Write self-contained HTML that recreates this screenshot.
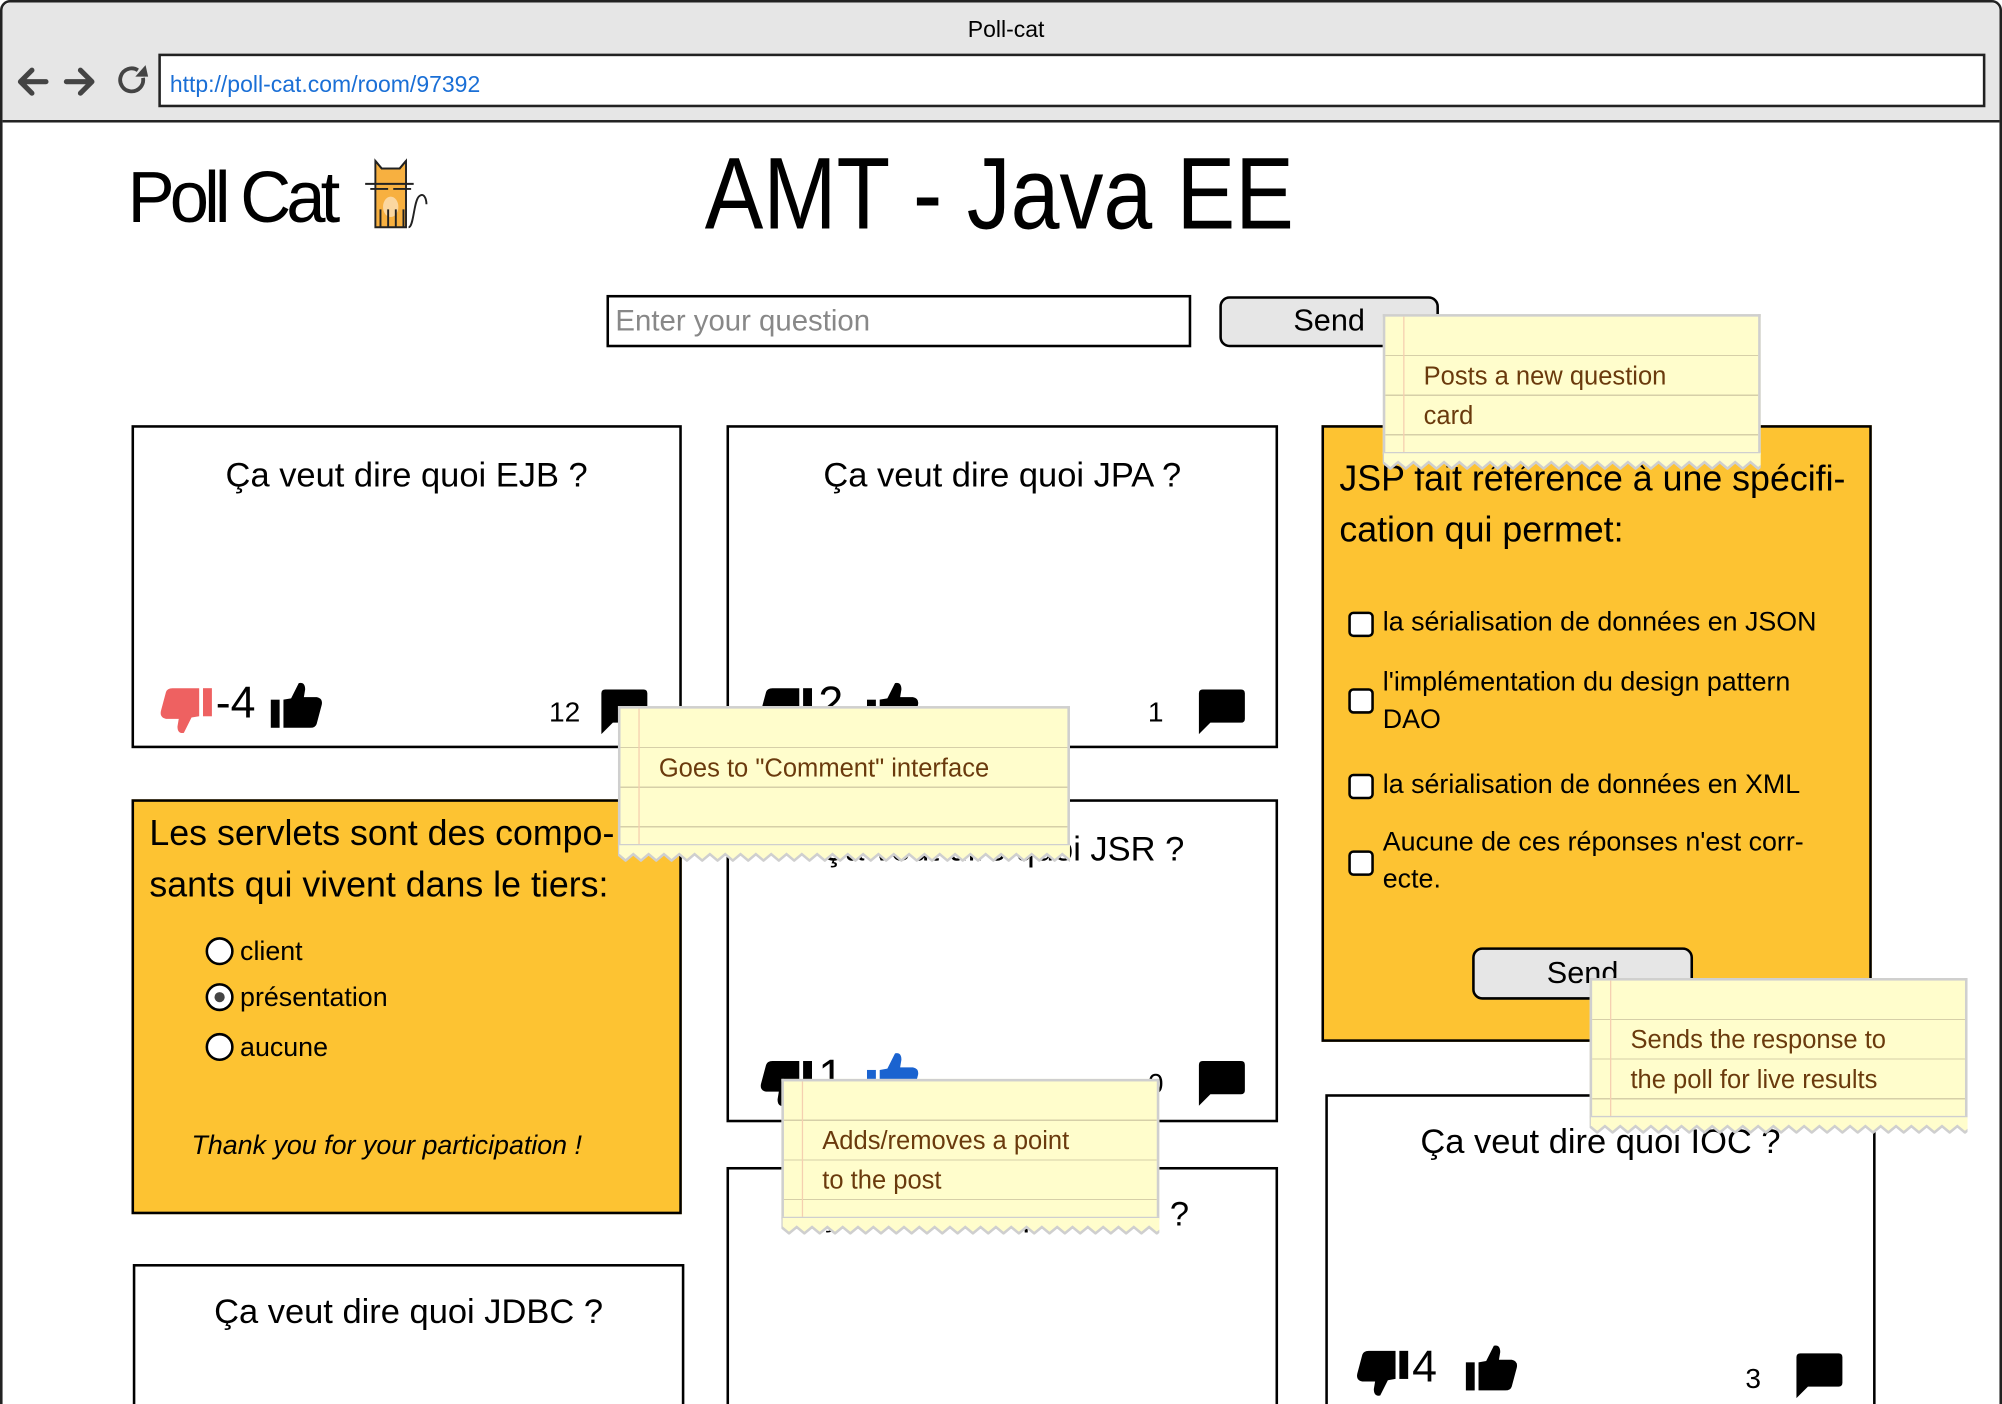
<!DOCTYPE html>
<html><head><meta charset="utf-8">
<style>
html,body{margin:0;padding:0;width:2002px;height:1404px;overflow:hidden;background:#fff}
#w{position:absolute;left:0;top:0;width:1568px;height:1100px;overflow:hidden;transform:scale(1.27679);transform-origin:0 0;font-family:"Liberation Sans",sans-serif;color:#000}
.a{position:absolute}
.card{position:absolute;border:2px solid #000;background:#fff;box-sizing:border-box;overflow:hidden}
.org{background:#FDC332}
.q{position:absolute;left:0;right:0;text-align:center;font-size:27px;white-space:nowrap}
.note{position:absolute;background:#FFFDCC;border:2px solid #cfcfcf;border-bottom:none;box-sizing:border-box;
 background-image:repeating-linear-gradient(to bottom,transparent 0,transparent 30px,#d6cfa8 30px,#d6cfa8 31px);background-position:0 0;color:#6a3a0d;font-size:20px;overflow:visible}
.note .pl{position:absolute;left:14px;top:0;bottom:0;width:1px;background:#f5cfb0}
.note .t{position:absolute;left:30px;line-height:31px}
.note svg{position:absolute;left:-2px;bottom:-12px}
.cb{position:absolute;width:20px;height:20px;border:2px solid #000;border-radius:4px;background:#fff;box-sizing:border-box}
.rd{position:absolute;width:22px;height:22px;border:2px solid #000;border-radius:50%;background:#fff;box-sizing:border-box}
.opt{position:absolute;font-size:21px;line-height:29px}
.btn{position:absolute;border:2px solid #000;border-radius:8px;background:#e6e6e6;box-sizing:border-box;text-align:center;font-size:24px}
</style></head><body><div id="w">
<div class="a" style="left:0;top:0;width:1568px;height:1110px;border:2px solid #222;border-radius:8px 8px 0 0;box-sizing:border-box"></div>
<div class="a" style="left:2px;top:2px;width:1564px;height:92px;background:#e6e6e6;border-radius:7px 7px 0 0;border-bottom:2px solid #222"></div>
<div class="a" style="left:0;width:1576px;top:13px;text-align:center;font-size:18px">Poll-cat</div>
<svg class="a" style="left:12px;top:50px" width="105" height="28" viewBox="0 0 105 28">
<path d="M24 14H5M13 5L4 14l9 9" stroke="#444" stroke-width="4" fill="none" stroke-linecap="round" stroke-linejoin="round"/>
<path d="M40 14h19M51 5l9 9-9 9" stroke="#444" stroke-width="4" fill="none" stroke-linecap="round" stroke-linejoin="round"/>
<path d="M96 5a9 9 0 1 0 4 6" stroke="#444" stroke-width="3" fill="none"/><path d="M94 10h10l-2-9z" fill="#444"/>
</svg>
<div class="a" style="left:124px;top:42px;width:1431px;height:42px;border:2px solid #222;background:#fff;box-sizing:border-box"></div>
<div class="a" style="left:133px;top:56px;font-size:18px;color:#1a6fd6">http://poll-cat.com/room/97392</div>

<div class="a" style="left:100px;top:120px;font-size:57px;letter-spacing:-4px;line-height:70px;transform:scaleX(0.97);transform-origin:0 0">Poll Cat</div>
<svg class="a" style="left:284px;top:116px" width="54" height="68" viewBox="0 0 54 68">
<path d="M10 62V10l5 6h14l5-6v52z" fill="#F7B040" stroke="#222" stroke-width="1.5"/>
<path d="M10 10l5 6h14l5-6" fill="none" stroke="#222" stroke-width="1.5"/>
<path d="M2 28h22M20 28h20M6 32h14M24 32h14" stroke="#222" stroke-width="1.5"/>
<ellipse cx="22" cy="46" rx="6" ry="8" fill="#fbd7a0"/>
<path d="M14 48v14M20 48v14M26 48v14M32 48v14" stroke="#222" stroke-width="1.5"/>
<path d="M36 62c4 0 4-20 8-24s6 2 6 6" fill="none" stroke="#222" stroke-width="1.5"/>
</svg>
<div class="a" style="left:552px;top:104px;font-size:80px;line-height:96px;white-space:nowrap;transform:scaleX(0.86);transform-origin:0 0">AMT - Java EE</div>

<div class="a" style="left:475px;top:231px;width:458px;height:41px;border:2px solid #000;box-sizing:border-box"></div>
<div class="a" style="left:482px;top:238px;font-size:23px;color:#888">Enter your question</div>
<div class="btn" style="left:955px;top:232px;width:172px;height:40px;line-height:36px">Send</div>

<svg width="0" height="0" style="position:absolute">
<defs>
<g id="up"><rect x="0" y="14" width="7" height="22"/><path d="M10 14L16 13L22 1Q27 0 27 6L26 12L36 12Q41 13 40 18L36 33Q35 36 31 36L10 36Z"/></g>
<g id="dn"><g transform="rotate(180 20.5 18.5)"><use href="#up"/></g></g>
<g id="cm"><path d="M3 2H35Q38 2 38 5V25Q38 28 35 28H11L2 37V5Q2 2 5 2Z"/></g>
</defs></svg>

<div class="card" style="left:103px;top:333px;width:431px;height:253px">
<div class="q" style="top:22px">Ça veut dire quoi EJB ?</div>
<svg class="a" style="left:20px;top:203px" width="41" height="37" viewBox="0 0 41 37"><g fill="#EE6161"><use href="#dn"/></g></svg>
<div class="a" style="left:64px;top:196px;font-size:35px">-4</div>
<svg class="a" style="left:107px;top:199px" width="41" height="37" viewBox="0 0 41 37"><use href="#up"/></svg>
<div class="a" style="left:325px;top:210px;font-size:22px">12</div>
<svg class="a" style="left:364px;top:203px" width="40" height="38" viewBox="0 0 40 38"><use href="#cm"/></svg>
</div>

<div class="card" style="left:569px;top:333px;width:432px;height:253px">
<div class="q" style="top:22px">Ça veut dire quoi JPA ?</div>
<svg class="a" style="left:24px;top:203px" width="41" height="37" viewBox="0 0 41 37"><use href="#dn"/></svg>
<div class="a" style="left:70px;top:196px;font-size:35px">2</div>
<svg class="a" style="left:108px;top:199px" width="41" height="37" viewBox="0 0 41 37"><use href="#up"/></svg>
<div class="a" style="left:328px;top:210px;font-size:22px">1</div>
<svg class="a" style="left:366px;top:203px" width="40" height="38" viewBox="0 0 40 38"><use href="#cm"/></svg>
</div>

<div class="card org" style="left:1035px;top:333px;width:431px;height:483px">
<div class="a" style="left:12px;top:20px;font-size:28px;line-height:40px">JSP fait référence à une spécifi-<br>cation qui permet:</div>
<div class="cb" style="left:19px;top:144px"></div><div class="opt" style="left:46px;top:138px">la sérialisation de données en JSON</div>
<div class="cb" style="left:19px;top:204px"></div><div class="opt" style="left:46px;top:185px">l'implémentation du design pattern<br>DAO</div>
<div class="cb" style="left:19px;top:271px"></div><div class="opt" style="left:46px;top:265px">la sérialisation de données en XML</div>
<div class="cb" style="left:19px;top:331px"></div><div class="opt" style="left:46px;top:310px">Aucune de ces réponses n'est corr-<br>ecte.</div>
<div class="btn" style="left:116px;top:407px;width:173px;height:41px;line-height:37px">Send</div>
</div>

<div class="card org" style="left:103px;top:626px;width:431px;height:325px">
<div class="a" style="left:12px;top:5px;font-size:28px;line-height:40px;white-space:nowrap">Les servlets sont des compo-<br>sants qui vivent dans le tiers:</div>
<div class="rd" style="left:56px;top:106px"></div><div class="opt" style="left:83px;top:103px">client</div>
<div class="rd" style="left:56px;top:142px"></div><div style="position:absolute;left:63px;top:149px;width:8px;height:8px;border-radius:50%;background:#444"></div><div class="opt" style="left:83px;top:139px">présentation</div>
<div class="rd" style="left:56px;top:181px"></div><div class="opt" style="left:83px;top:178px">aucune</div>
<div class="a" style="left:45px;top:258px;font-size:21px;font-style:italic">Thank you for your participation !</div>
</div>

<div class="card" style="left:569px;top:626px;width:432px;height:253px">
<div class="q" style="top:22px">Ça veut dire quoi JSR ?</div>
<svg class="a" style="left:24px;top:202px" width="41" height="37" viewBox="0 0 41 37"><use href="#dn"/></svg>
<div class="a" style="left:70px;top:195px;font-size:35px">1</div>
<svg class="a" style="left:108px;top:196px" width="41" height="37" viewBox="0 0 41 37"><g fill="#1a63d0"><use href="#up"/></g></svg>
<div class="a" style="left:328px;top:208px;font-size:22px">0</div>
<svg class="a" style="left:366px;top:201px" width="40" height="38" viewBox="0 0 40 38"><use href="#cm"/></svg>
</div>

<div class="card" style="left:569px;top:914px;width:432px;height:200px">
<div class="q" style="top:20px">Ça veut dire quoi DAO ?</div>
</div>

<div class="card" style="left:1038px;top:857px;width:431px;height:260px">
<div class="q" style="top:20px">Ça veut dire quoi IOC ?</div>
<svg class="a" style="left:22px;top:198px" width="41" height="37" viewBox="0 0 41 37"><use href="#dn"/></svg>
<div class="a" style="left:66px;top:192px;font-size:35px">4</div>
<svg class="a" style="left:108px;top:194px" width="41" height="37" viewBox="0 0 41 37"><use href="#up"/></svg>
<div class="a" style="left:327px;top:208px;font-size:22px">3</div>
<svg class="a" style="left:365px;top:199px" width="40" height="38" viewBox="0 0 40 38"><use href="#cm"/></svg>
</div>

<div class="card" style="left:104px;top:990px;width:432px;height:130px">
<div class="q" style="top:20px">Ça veut dire quoi JDBC ?</div>
</div>

<div class="note" style="left:1083px;top:246px;width:296px;height:110px">
<div class="pl"></div><div class="t" style="top:32px">Posts a new question<br>card</div>
<svg width="296" height="14" viewBox="0 0 296 14"><path d="M0 0V8 l6 5 6-5 6 5 6-5 6 5 6-5 6 5 6-5 6 5 6-5 6 5 6-5 6 5 6-5 6 5 6-5 6 5 6-5 6 5 6-5 6 5 6-5 6 5 6-5 6 5 6-5 6 5 6-5 6 5 6-5 6 5 6-5 6 5 6-5 6 5 6-5 6 5 6-5 6 5 6-5 6 5 6-5 6 5 6-5 6 5 6-5 6 5 6-5 6 5 6-5 6 5 6-5 6 5 6-5V0Z" fill="#FFFDCC" stroke="#cfcfcf" stroke-width="2"/></svg>
</div>
<div class="note" style="left:484px;top:553px;width:354px;height:110px">
<div class="pl"></div><div class="t" style="top:32px">Goes to "Comment" interface</div>
<svg width="354" height="14" viewBox="0 0 354 14"><path d="M0 0V8 l6 5 6-5 6 5 6-5 6 5 6-5 6 5 6-5 6 5 6-5 6 5 6-5 6 5 6-5 6 5 6-5 6 5 6-5 6 5 6-5 6 5 6-5 6 5 6-5 6 5 6-5 6 5 6-5 6 5 6-5 6 5 6-5 6 5 6-5 6 5 6-5 6 5 6-5 6 5 6-5 6 5 6-5 6 5 6-5 6 5 6-5 6 5 6-5 6 5 6-5 6 5 6-5 6 5 6-5 6 5 6-5 6 5 6-5 6 5 6-5 6 5 6-5 6 5 6-5 6 5 6-5 6 5 6-5 6 5 6-5V0Z" fill="#FFFDCC" stroke="#cfcfcf" stroke-width="2"/></svg>
</div>
<div class="note" style="left:612px;top:845px;width:296px;height:110px">
<div class="pl"></div><div class="t" style="top:32px">Adds/removes a point<br>to the post</div>
<svg width="296" height="14" viewBox="0 0 296 14"><path d="M0 0V8 l6 5 6-5 6 5 6-5 6 5 6-5 6 5 6-5 6 5 6-5 6 5 6-5 6 5 6-5 6 5 6-5 6 5 6-5 6 5 6-5 6 5 6-5 6 5 6-5 6 5 6-5 6 5 6-5 6 5 6-5 6 5 6-5 6 5 6-5 6 5 6-5 6 5 6-5 6 5 6-5 6 5 6-5 6 5 6-5 6 5 6-5 6 5 6-5 6 5 6-5 6 5 6-5V0Z" fill="#FFFDCC" stroke="#cfcfcf" stroke-width="2"/></svg>
</div>
<div class="note" style="left:1245px;top:766px;width:296px;height:110px">
<div class="pl"></div><div class="t" style="top:32px">Sends the response to<br>the poll for live results</div>
<svg width="296" height="14" viewBox="0 0 296 14"><path d="M0 0V8 l6 5 6-5 6 5 6-5 6 5 6-5 6 5 6-5 6 5 6-5 6 5 6-5 6 5 6-5 6 5 6-5 6 5 6-5 6 5 6-5 6 5 6-5 6 5 6-5 6 5 6-5 6 5 6-5 6 5 6-5 6 5 6-5 6 5 6-5 6 5 6-5 6 5 6-5 6 5 6-5 6 5 6-5 6 5 6-5 6 5 6-5 6 5 6-5 6 5 6-5 6 5 6-5 6 5 6-5V0Z" fill="#FFFDCC" stroke="#cfcfcf" stroke-width="2"/></svg>
</div>
</div></body></html>
